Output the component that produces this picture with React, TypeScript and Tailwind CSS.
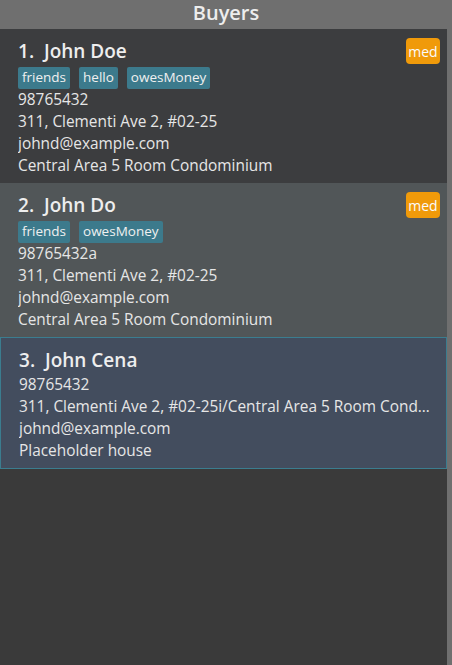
const buyers = [
  {
    id: 1,
    name: "John Doe",
    tags: ["friends", "hello", "owesMoney"],
    phone: "98765432",
    address: "311, Clementi Ave 2, #02-25",
    email: "johnd@example.com",
    house: "Central Area 5 Room Condominium",
    priority: "med",
  },
  {
    id: 2,
    name: "John Do",
    tags: ["friends", "owesMoney"],
    phone: "98765432a",
    address: "311, Clementi Ave 2, #02-25",
    email: "johnd@example.com",
    house: "Central Area 5 Room Condominium",
    priority: "med",
  },
  {
    id: 3,
    name: "John Cena",
    tags: [],
    phone: "98765432",
    address: "311, Clementi Ave 2, #02-25i/Central Area 5 Room Condominium",
    email: "johnd@example.com",
    house: "Placeholder house",
    priority: "",
  },
];

export default function App() {
  return (
    <div
      className="w-[452px] h-[665px] flex flex-col bg-[#6f6f6f] overflow-hidden"
      style={{ fontFamily: '"Open Sans", "Noto Sans", sans-serif' }}
    >
      <div className="h-[29px] flex items-center justify-center pb-[3px] text-[20px] font-semibold text-[#ededed] leading-none">
        Buyers
      </div>
      <div className="flex-1 w-[447px] bg-[#3a3a3a] flex flex-col">
        {buyers.map((b, i) => {
          const selected = i === 2;
          const bg = selected
            ? "bg-[#434d5e] border border-[#3b7d8f] pl-[18px]"
            : i % 2 === 0
            ? "bg-[#3c3d3f] pl-[18px]"
            : "bg-[#515658] pl-[18px]";
          return (
            <div key={b.id} className={`${bg} pt-2 pb-[6px] pr-[7px] flex`}>
              <div className="flex-1 min-w-0 flex flex-col text-[#e6e6e6]">
                <div className="h-[28px] flex items-center text-[19px] font-semibold text-[#eeeeee] whitespace-pre">
                  {b.id}.  {b.name}
                </div>
                {b.tags.length > 0 && (
                  <div className="flex gap-[9px] mt-[2px] h-[22px]">
                    {b.tags.map((t) => (
                      <span
                        key={t}
                        className="bg-[#3c7a8c] text-[#f0f0f0] text-[13.5px] px-[4px] rounded-[2px] flex items-center leading-none"
                      >
                        {t}
                      </span>
                    ))}
                  </div>
                )}
                {[b.phone, b.address, b.email, b.house].map((l, k) => (
                  <div key={k} className="h-[22px] flex items-center text-[15.4px] whitespace-nowrap overflow-hidden">
                    <span className="truncate">{l}</span>
                  </div>
                ))}
              </div>
              {b.priority && (
                <div className="mt-[1px]">
                  <span className="h-[26px] w-[34px] bg-[#f09a0a] rounded-[4px] text-[14px] text-[#fbfbfb] flex items-center justify-center">
                    {b.priority}
                  </span>
                </div>
              )}
            </div>
          );
        })}
      </div>
    </div>
  );
}
